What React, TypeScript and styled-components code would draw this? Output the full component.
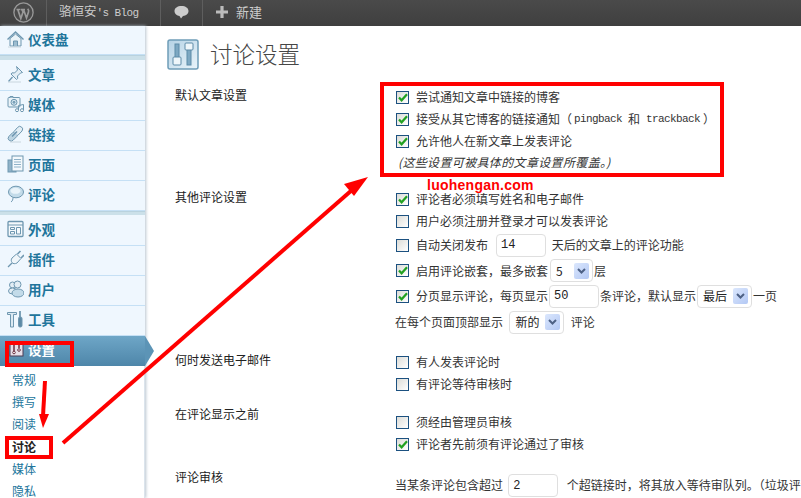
import React from "react";
import styled, { createGlobalStyle } from "styled-components";

const CJK = `"Noto Sans CJK SC", "Liberation Sans", sans-serif`;
const Global = createGlobalStyle`
  html, body { margin: 0; padding: 0; background: #fff; }
  body { font: 12px/18px ${CJK}; color: #333; }
`;

const Page = styled.div`
  position: relative;
  width: 801px;
  height: 498px;
  overflow: hidden;
`;
const TopBar = styled.div`
  display: flex;
  height: 26px;
  background: linear-gradient(#4a4a4a, #3f3f3f);
  color: #ccc;
`;
const BarCell = styled.div<{ $w: number; $pad?: number }>`
  width: ${p => p.$w}px;
  box-sizing: border-box;
  display: flex;
  align-items: center;
  justify-content: ${p => (p.$pad === undefined ? "center" : "flex-start")};
  padding-left: ${p => p.$pad ?? 0}px;
  gap: 8px;
  border-right: 1px solid #5e5e5e;
  font-size: 13px;
  padding-bottom: 2px;
  &:last-child { border-right: 0; }
`;
const BlogName = styled.span`
  font-size: 12.5px;
  display: flex;
  align-items: baseline;
`;
const Mono = styled.span`
  font-family: "Liberation Mono", monospace;
  font-size: 11px;
  letter-spacing: -0.6px;
`;
const MonoGap = styled(Mono)<{ $l: number; $r: number }>`
  margin: 0 ${p => p.$r}px 0 ${p => p.$l}px;
`;
const Body = styled.div`
  display: flex;
  height: 472px;
`;
const Sidebar = styled.div`
  width: 145px;
  flex: none;
  position: relative;
  background: #fff;
  box-shadow: 1px 0 3px #b9c4cf, inset -1px 0 0 #dbe4ec;
`;
const Item = styled.div<{ $h?: number; $pb?: number }>`
  height: ${p => p.$h ?? 30}px;
  box-sizing: border-box;
  display: flex;
  align-items: center;
  gap: 4px;
  padding: 0 0 ${p => p.$pb ?? 4}px 7px;
  background: #eff7fe;
  border-bottom: 1px solid #c5e0f5;
  color: #21759b;
  font-weight: 700;
  font-size: 13.5px;
`;
const Sep = styled.div<{ $h: number }>`
  height: ${p => p.$h}px;
  background: #cbe0e9;
  border-top: 1px solid #b9d2de;
  border-bottom: 1px solid #eff7fe;
  box-sizing: border-box;
`;
const Active = styled(Item)`
  position: relative;
  background: linear-gradient(#6ea6c7, #4e86a9);
  border-bottom: 0;
  color: #fff;
  &::after {
    content: "";
    position: absolute;
    left: 145px;
    top: 0;
    border-style: solid;
    border-width: 15px 0 15px 9px;
    border-color: transparent transparent transparent #5c94b6;
  }
`;
const Sub = styled.div`
  padding: 4px 0 0 12px;
  display: flex;
  flex-direction: column;
`;
const SubLink = styled.div<{ $on?: boolean }>`
  height: 22.2px;
  line-height: 20px;
  color: ${p => (p.$on ? "#222" : "#21759b")};
  font-weight: ${p => (p.$on ? 700 : 400)};
`;
const Main = styled.div`
  flex: 1;
  min-width: 0;
  padding: 13px 0 0 22px;
  overflow: hidden;
`;
const Head = styled.div`
  display: flex;
  align-items: center;
  gap: 11px;
  height: 31px;
  margin-bottom: 16px;
`;
const HeadIcon = styled.div`
  width: 32px;
  height: 31px;
  flex: none;
`;
const Title = styled.h1`
  margin: 0 0 3px;
  font-size: 22.5px;
  font-weight: 300;
  color: #464646;
`;
const Section = styled.section<{ $mb: number }>`
  display: grid;
  grid-template-columns: 221px 1fr;
  margin-bottom: ${p => p.$mb}px;
  margin-left: 8px;
`;
const Label = styled.div`
  color: #222;
  line-height: 18px;
  white-space: nowrap;
`;
const Col = styled.div<{ $top?: number }>`
  padding-top: ${p => p.$top ?? 0}px;
`;
const Row = styled.div<{ $h?: number; $ml?: number }>`
  height: ${p => p.$h ?? 22}px;
  margin-left: ${p => p.$ml ?? 0}px;
  display: flex;
  align-items: center;
  white-space: nowrap;
`;
const Check = styled.span`
  width: 13px;
  height: 13px;
  flex: none;
  box-sizing: border-box;
  border: 1px solid #1c5180;
  background: linear-gradient(135deg, #dcdcd7, #fff);
  margin-right: 7px;
  display: flex;
  align-items: center;
  justify-content: center;
`;
const Field = styled.span<{ $w: number; $mono?: boolean; $ml?: number; $mr?: number }>`
  display: inline-flex;
  align-items: center;
  box-sizing: border-box;
  width: ${p => p.$w}px;
  height: 23px;
  padding-left: 4px;
  margin: 0 ${p => p.$mr ?? 3}px 0 ${p => p.$ml ?? 8}px;
  border: 1px solid #dfdfdf;
  border-radius: 4px;
  font-family: ${p => (p.$mono ? `"Liberation Mono", monospace` : `"Liberation Sans", sans-serif`)};
  color: #222;
`;
const Select = styled.span<{ $w: number; $ml?: number }>`
  display: inline-flex;
  align-items: center;
  justify-content: space-between;
  box-sizing: border-box;
  width: ${p => p.$w}px;
  height: 23px;
  padding: 0 3px 0 5px;
  margin: 0 1px 0 ${p => p.$ml ?? 1}px;
  border: 1px solid #dfdfdf;
  border-radius: 4px;
  color: #222;
`;
const SelBtn = styled.span`
  width: 15px;
  height: 16px;
  border-radius: 2px;
  background: linear-gradient(135deg, #dbe7fd, #b3c8f4);
  display: flex;
  align-items: center;
  justify-content: center;
`;
const Note = styled.div`
  height: 19px;
  line-height: 19px;
  font-style: italic;
  font-size: 12px;
  letter-spacing: 0.35px;
  padding-left: 2px;
  color: #333;
`;
const Frame = styled.div<{ $x: number; $y: number; $w: number; $h: number; $b: number }>`
  position: absolute;
  left: ${p => p.$x}px;
  top: ${p => p.$y}px;
  width: ${p => p.$w}px;
  height: ${p => p.$h}px;
  box-sizing: border-box;
  border: ${p => p.$b}px solid #f00;
`;
const Stamp = styled.div`
  position: absolute;
  left: 427px;
  top: 177px;
  color: #f00;
  font: 700 14px/16px "Liberation Sans", sans-serif;
  letter-spacing: 0.25px;
`;
const Overlay = styled.svg`
  position: absolute;
  left: 0;
  top: 0;
`;

const Chev = () => (
  <svg width="9" height="6" viewBox="0 0 9 6"><path d="M1 1l3.5 3.5L8 1" fill="none" stroke="#4d6185" strokeWidth="2" /></svg>
);
const Box = ({ on }: { on?: boolean }) => (
  <Check>
    {on && <svg width="10" height="9" viewBox="0 0 10 9"><path d="M1 4.5l2.6 2.8L9 1.2" fill="none" stroke="#21a121" strokeWidth="2.2" /></svg>}
  </Check>
);

const S = "#6e97b0";
const F = "#d3e5f0";
const Ico = ({ children }: { children: React.ReactNode }) => (
  <svg width="17" height="18" viewBox="0 0 17 18" fill={F} stroke={S} strokeWidth="1" style={{ flex: "none" }}>{children}</svg>
);
const Ground = () => <path d="M1 17h13" stroke="#c9d6de" fill="none" />;
const icons: Record<string, React.ReactNode> = {
  home: <><path d="M.5 9.500L8.500 2l8 7.500" fill="none" strokeWidth="1.400" /><path d="M3 8.500L8.500 4l5.500 4.500V16H3z" fill="#eaf3f8" /><path d="M6.500 16v-5h4v5" fill="#9dbdd0" /><Ground /></>,
  pin: <><path d="M9.500 1.500l6 6-2 .5-3 3 .2 2.500-1.200 1-5.500-5.500 1-1.200 2.500.2 3-3z" fill="#e3eef5" /><path d="M5.500 12l-4 4.500" strokeWidth="1.300" /><Ground /></>,
  media: <><rect x="1" y="2.500" width="12" height="9.500" rx="1" fill="#eaf3f8" /><path d="M3 2.500V1.500h3v1" /><circle cx="7" cy="7.300" r="3" /><circle cx="7" cy="7.300" r="1" fill="#8fb2c8" /><circle cx="10" cy="15.200" r="1.500" fill="#fff" /><circle cx="15" cy="15.200" r="1.500" fill="#fff" /><path d="M11.500 15V10.500l5-1V15" fill="none" /></>,
  link: <><path d="M1.800 11.500l4-4a2.800 2.800 0 0 1 4 4l-3.500 3.500a2.800 2.800 0 0 1-4.500-3.500z" fill="#bdd4e2" /><path d="M7 6.500l3.500-4a2.800 2.800 0 0 1 4.500 3.500l-4 4.200" fill="#e3eef5" /><path d="M5 11.500l5-5" strokeWidth="1.600" /><path d="M3 17h11" stroke="#c9d6de" /></>,
  page: <><rect x="1" y="5" width="8" height="12" fill="#8fb2c8" /><rect x="5" y="1" width="11" height="15" fill="#f4f9fc" /><path d="M7 4.500h7M7 7h7M7 9.500h7M7 12h7" stroke="#8fb2c8" /></>,
  bubble: <><ellipse cx="9" cy="7" rx="7.500" ry="5.800" fill="#c3dbe9" /><ellipse cx="8.500" cy="5.800" rx="5" ry="3" fill="#e9f3f9" stroke="none" /><path d="M6 12.500c0 2-.5 3.500-2 4.500" fill="none" /></>,
  look: <><rect x="1" y="1.500" width="15" height="15" rx="1" fill="#f4f9fc" strokeWidth="1.300" /><path d="M1 5h15" /><path d="M3.500 7.500h4v2h-4zM3.500 11.500h4v2.500h-4zM9.500 7.500h4V14h-4z" fill="#f4f9fc" /></>,
  plug: <><path d="M5 8l4.500-4 4.500 4.500L10 13c-2 1-4 1-5-.5S4 9.500 5 8z" fill="#f0f6fa" /><path d="M10.500 4l3-3M14 8l3-3" strokeWidth="1.600" /><path d="M5 13l-4 4" strokeWidth="1.300" /></>,
  users: <><circle cx="5.500" cy="5" r="3" fill="#e3eef5" /><circle cx="10.500" cy="4.500" r="3.500" fill="#e3eef5" /><ellipse cx="5.500" cy="11" rx="4" ry="3" fill="#e3eef5" /><ellipse cx="11" cy="13" rx="6" ry="4" fill="#c3dbe9" /></>,
  tools: <><path d="M.5 2.500h9v2h-3V17h-3V4.500h-3z" fill="#dbe9f2" /><path d="M13 1v6" strokeWidth="1.800" /><rect x="11.500" y="7" width="3.500" height="10" rx="1.500" fill="#5c8aa6" /></>,
  set: <><rect x="3" y="2" width="13" height="14" fill="#e8dfe8" stroke="#4a3a55" /><path d="M7 4v7M12 4v4" stroke="#6b2f3f" strokeWidth="1.500" /><circle cx="7" cy="12.500" r="1.300" fill="#fff" stroke="#6b2f3f" /><circle cx="12" cy="10" r="1.300" fill="#fff" stroke="#6b2f3f" /></>,
};

const nav1 = [["pin", "文章"], ["media", "媒体"], ["link", "链接"], ["page", "页面"], ["bubble", "评论"]];
const nav2 = [["look", "外观"], ["plug", "插件"], ["users", "用户"], ["tools", "工具"]];
const subs = ["常规", "撰写", "阅读", "讨论", "媒体", "隐私"];

export default function App() {
  return (
    <Page>
      <Global />
      <TopBar>
        <BarCell $w={47}>
          <svg width="21" height="21" viewBox="0 0 21 21">
            <circle cx="10.5" cy="10.5" r="9.6" fill="#4a4a4a" stroke="#9a9a9a" strokeWidth="1.300" />
            <path d="M3.500 7.500h4M4.800 7.500l3 9 2.200-6.500-1.200-2.500M8 7.500h4M10.500 7.500l3 8.500 2-6c.5-1.500-.2-2.500-.8-3.200" fill="none" stroke="#9a9a9a" strokeWidth="1.700" />
          </svg>
        </BarCell>
        <BarCell $w={114} $pad={12}><BlogName>骆恒安<Mono>'s Blog</Mono></BlogName></BarCell>
        <BarCell $w={42}>
          <svg width="15" height="14" viewBox="0 0 15 14"><path d="M7.500 1C3.500 1 .5 3 .5 6s2.500 4.500 5 5l1.500 2.500L9 11c3-.5 5.500-2 5.500-5S11.500 1 7.500 1z" fill="#ccc" /></svg>
        </BarCell>
        <BarCell $w={90} $pad={13}>
          <svg width="12" height="12" viewBox="0 0 12 12"><path d="M6 0v12M0 6h12" stroke="#bbb" strokeWidth="3.200" /></svg>
          新建
        </BarCell>
      </TopBar>
      <Body>
        <Sidebar>
          <Item $h={29} $pb={2}><Ico>{icons.home}</Ico>仪表盘</Item>
          <Sep $h={6} />
          {nav1.map(([ic, t]) => <Item key={t}><Ico>{icons[ic]}</Ico>{t}</Item>)}
          <Sep $h={5} />
          {nav2.map(([ic, t]) => <Item key={t}><Ico>{icons[ic]}</Ico>{t}</Item>)}
          <Active><Ico>{icons.set}</Ico>设置</Active>
          <Sub>
            {subs.map((t, i) => <SubLink key={i} $on={t === "讨论"}>{t}</SubLink>)}
          </Sub>
        </Sidebar>
        <Main>
          <Head>
            <HeadIcon>
              <svg width="32" height="31" viewBox="0 0 32 31">
                <defs>
                  <linearGradient id="hg" x1="0" y1="0" x2="1" y2="1">
                    <stop offset="0" stopColor="#b4d2e5" />
                    <stop offset="1" stopColor="#eaf4fa" />
                  </linearGradient>
                </defs>
                <rect x="1" y="1" width="30" height="29" rx="2" fill="url(#hg)" stroke="#6f9db8" strokeWidth="1.500" />
                <rect x="8" y="5" width="4" height="18" fill="#7da8c2" stroke="#5d8ba8" />
                <rect x="6" y="18" width="8" height="8" rx="1" fill="#eef6fa" stroke="#5d8ba8" />
                <rect x="20" y="6" width="4" height="20" fill="#7da8c2" stroke="#5d8ba8" />
                <rect x="18" y="4" width="8" height="7" rx="1" fill="#eef6fa" stroke="#5d8ba8" />
              </svg>
            </HeadIcon>
            <Title>讨论设置</Title>
          </Head>
          <Section $mb={17}>
            <Label>默认文章设置</Label>
            <Col>
              <Row><Box on />尝试通知文章中链接的博客</Row>
              <Row><Box on />接受从其它博客的链接通知（<MonoGap $l={2} $r={6}>pingback</MonoGap>和<MonoGap $l={6} $r={3}>trackback</MonoGap>）</Row>
              <Row><Box on />允许他人在新文章上发表评论</Row>
              <Note>(这些设置可被具体的文章设置所覆盖。)</Note>
            </Col>
          </Section>
          <Section $mb={16}>
            <Label>其他评论设置</Label>
            <Col>
              <Row><Box on />评论者必须填写姓名和电子邮件</Row>
              <Row><Box />用户必须注册并登录才可以发表评论</Row>
              <Row $h={26}><Box />自动关闭发布<Field $w={50} $mono>14</Field>&nbsp;天后的文章上的评论功能</Row>
              <Row $h={25}><Box on />启用评论嵌套，最多嵌套<Select $w={43} $ml={2}>5<SelBtn><Chev /></SelBtn></Select>层</Row>
              <Row $h={26}><Box on />分页显示评论，每页显示<Field $w={50} $ml={1} $mr={1} $mono>50</Field>条评论，默认显示<Select $w={55}>最后<SelBtn><Chev /></SelBtn></Select>一页</Row>
              <Row $h={26} $ml={-1}>在每个页面顶部显示&nbsp;&nbsp;<Select $w={55}>新的<SelBtn><Chev /></SelBtn></Select>&nbsp;&nbsp;评论</Row>
            </Col>
          </Section>
          <Section $mb={10}>
            <Label>何时发送电子邮件</Label>
            <Col>
              <Row><Box />有人发表评论时</Row>
              <Row><Box />有评论等待审核时</Row>
            </Col>
          </Section>
          <Section $mb={13}>
            <Label>在评论显示之前</Label>
            <Col $top={6}>
              <Row><Box />须经由管理员审核</Row>
              <Row><Box on />评论者先前须有评论通过了审核</Row>
            </Col>
          </Section>
          <Section $mb={0}>
            <Label>评论审核</Label>
            <Col $top={4}>
              <Row $h={26} $ml={-1}>当某条评论包含超过&nbsp;&nbsp;<Field $w={50} $ml={0}>2</Field>&nbsp;&nbsp;个超链接时，将其放入等待审队列。（垃圾评论的一个</Row>
            </Col>
          </Section>
        </Main>
      </Body>
      <Frame $x={380} $y={82} $w={344} $h={95} $b={4} />
      <Frame $x={5} $y={341} $w={69} $h={26} $b={4} />
      <Frame $x={5} $y={436} $w={48} $h={23} $b={4} />
      <Stamp>luohengan.com</Stamp>
      <Overlay width="801" height="498" viewBox="0 0 801 498">
        <path d="M63 443L352 190" stroke="#f00" strokeWidth="4" fill="none" />
        <path d="M368 177l-24 7 10 12z" fill="#f00" />
        <path d="M45 381L43 416" stroke="#f00" strokeWidth="4" fill="none" />
        <path d="M39 414h10l-6 14z" fill="#f00" />
      </Overlay>
    </Page>
  );
}
